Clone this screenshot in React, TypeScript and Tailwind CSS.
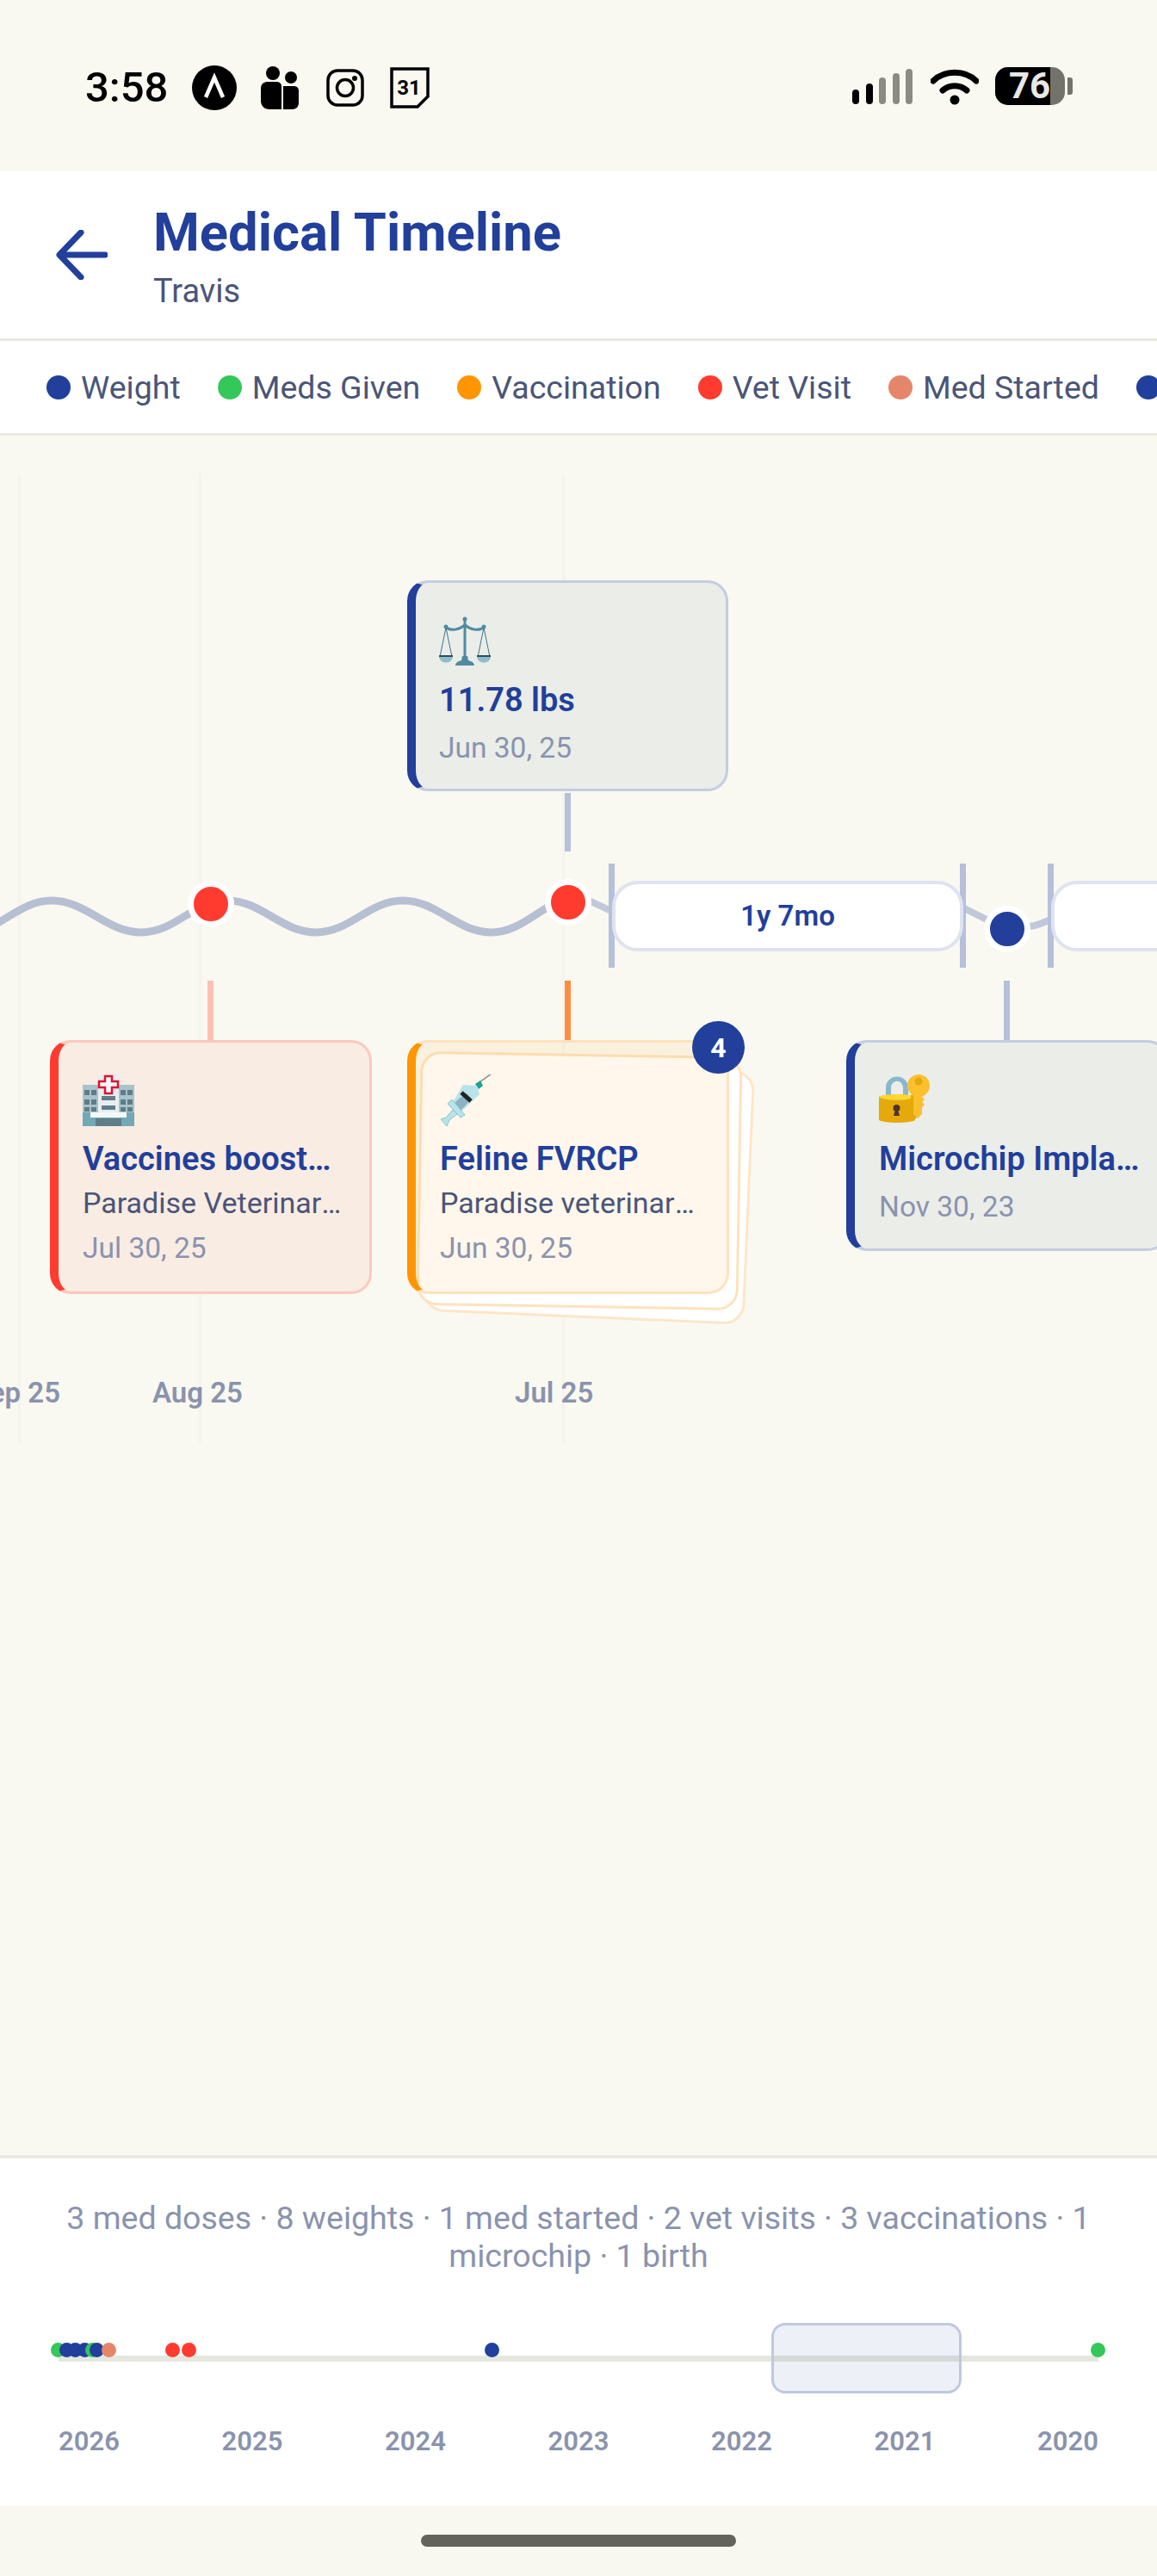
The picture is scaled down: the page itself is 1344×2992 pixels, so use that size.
import React from "react";

const ScaleEmoji = () => (
  <svg viewBox="0 0 60 60" className="w-[60px] h-[60px]">
    <path d="M8 14 L1 48 M8 14 L15 48 M52 14 L45 48 M52 14 L59 48" stroke="#3f7485" strokeWidth="1" fill="none" />
    <path d="M0 47 H16 C16 57 0 57 0 47 Z" fill="#8fbccb" />
    <path d="M44 47 H60 C60 57 44 57 44 47 Z" fill="#8fbccb" />
    <path d="M0 47 H16 M44 47 H60" stroke="#2f4f5a" strokeWidth="2" />
    <path d="M7 13 C14 19 24 16 30 11 C36 16 46 19 53 13" stroke="#4f8b9f" strokeWidth="3" fill="none" />
    <rect x="28.5" y="5" width="3" height="44" fill="#4f8b9f" />
    <circle cx="30" cy="4" r="2.5" fill="#4f8b9f" />
    <circle cx="8" cy="13" r="2.5" fill="#4f8b9f" />
    <circle cx="52" cy="13" r="2.5" fill="#4f8b9f" />
    <path d="M27 47 H33 L34 52 C38 53 41 55 41 58 H19 C19 55 22 53 26 52 Z" fill="#4f8b9f" />
  </svg>
);

const HospitalEmoji = () => (
  <svg viewBox="0 0 60 60" className="w-[60px] h-[60px]">
    <rect x="0" y="12" width="60" height="48" fill="#a8c3cb" />
    <rect x="18" y="0" width="24" height="50" fill="#e8edee" />
    <rect x="0" y="44" width="60" height="16" fill="#72a9b6" />
    <rect x="9" y="44" width="42" height="6" fill="#f5f8f8" />
    <g fill="#5f7d89">
      <rect x="2" y="18" width="6" height="6" />
      <rect x="10" y="18" width="6" height="6" />
      <rect x="2" y="29" width="6" height="6" />
      <rect x="10" y="29" width="6" height="6" />
      <rect x="2" y="38" width="6" height="5" />
      <rect x="10" y="38" width="6" height="5" />
      <rect x="44" y="18" width="6" height="6" />
      <rect x="52" y="18" width="6" height="6" />
      <rect x="44" y="29" width="6" height="6" />
      <rect x="52" y="29" width="6" height="6" />
      <rect x="44" y="38" width="6" height="5" />
      <rect x="52" y="38" width="6" height="5" />
      <rect x="22" y="25" width="16" height="5" />
      <rect x="22" y="36" width="16" height="5" />
      <rect x="15" y="51" width="30" height="9" />
    </g>
    <path d="M26 2 H34 V8 H41 V15 H34 V22 H26 V15 H19 V8 H26 Z" fill="#f5f8f8" stroke="#dd1133" strokeWidth="2.5" />
  </svg>
);

const SyringeEmoji = () => (
  <svg viewBox="0 0 60 60" className="w-[60px] h-[60px]">
    <path d="M46 9 L60 -1" stroke="#7a8a8f" strokeWidth="1.5" />
    <path d="M41 11 L47 7 L50 13 L45 17 Z" fill="#1aa58c" />
    <path d="M27 12 L43 13 L46 23 L24 44 L14 34 Z" fill="#b9e3ea" />
    <path d="M21 29 L31 22 L37 28 L24 42 L16 35 Z" fill="#8cb2c4" />
    <path d="M25 21 L36 31" stroke="#222" strokeWidth="5" />
    <path d="M14 29 L29 47 L24 50 L9 34 Z" fill="#b9e3ea" stroke="#8fc2cc" strokeWidth="1" />
    <path d="M15 41 L7 50 L1 52 L8 60 L11 53 L20 46 Z" fill="#b9e3ea" stroke="#8fc2cc" strokeWidth="1" />
  </svg>
);

const LockEmoji = () => (
  <svg viewBox="0 0 60 60" className="w-[60px] h-[60px]">
    <path d="M8 30 V16 C8 -2 34 -2 34 16 V30 H28 V16 C28 5 14 5 14 16 V30 Z" fill="#89b8cc" />
    <path d="M0 26 C6 22 36 22 42 26 V53 C36 57 6 57 0 53 Z" fill="#e5a90c" />
    <path d="M0 26 C6 22 36 22 42 26 C36 31 6 31 0 26 Z" fill="#fdd835" />
    <circle cx="20.5" cy="39" r="4" fill="#4e342e" />
    <path d="M19 41 H22 L24 48 H17 Z" fill="#4e342e" />
    <path d="M37 24 H45 V48 L42 52 H37 Z" fill="#e5a90c" />
    <circle cx="46" cy="13" r="13" fill="#fbc02d" />
    <path d="M40 22 H50 V26 L53 29 L50 32 L53 35 L50 38 V46 L45 51 L40 46 Z" fill="#fbc02d" />
    <circle cx="46" cy="8" r="4.5" fill="#e5a90c" />
  </svg>
);

const StatusBar = () => (
  <div className="h-[199px] bg-[#f9f9f1] flex items-start justify-between pl-[99px] pr-[98px] pt-[76px]">
    <div className="flex items-center h-[51px]">
      <span className="text-[49px] font-medium text-black w-[124px] leading-[51px]">3:58</span>
      <svg viewBox="0 0 52 52" className="w-[52px] h-[52px]">
        <circle cx="26" cy="26" r="26" fill="#000" />
        <path d="M16 37 L26 14 L36 37" stroke="#fff" strokeWidth="4.5" fill="none" />
      </svg>
      <svg viewBox="0 0 44 50" className="w-[44px] h-[50px] ml-[28px]">
        <circle cx="14" cy="8" r="8" fill="#000" />
        <circle cx="35" cy="13" r="7" fill="#000" />
        <path d="M0 26 C0 20 4 18 8 18 H18 C22 18 24 20 24 24 V50 H10 C4 50 0 46 0 40 Z" fill="#000" />
        <path d="M26 23 H38 C42 23 44 25 44 29 V42 C44 47 41 50 36 50 H26 Z" fill="#000" />
      </svg>
      <svg viewBox="0 0 44 44" className="w-[44px] h-[44px] ml-[32px]">
        <rect x="2" y="2" width="40" height="40" rx="11" fill="none" stroke="#000" strokeWidth="3.5" />
        <circle cx="22" cy="22" r="9.5" fill="none" stroke="#000" strokeWidth="3.5" />
        <circle cx="33" cy="11" r="3" fill="#000" />
      </svg>
      <svg viewBox="0 0 46 48" className="w-[46px] h-[48px] ml-[30px]">
        <path d="M2 2 H44 V34 L32 46 H2 Z" fill="none" stroke="#000" strokeWidth="3.5" />
        <text x="22" y="32" textAnchor="middle" fontSize="24" fontWeight="700" fontFamily="Roboto, sans-serif" fill="#000">31</text>
      </svg>
    </div>
    <div className="flex items-start">
      <svg viewBox="0 0 74 42" className="w-[74px] h-[42px] mt-[4px]">
        <g strokeWidth="8" strokeLinecap="round">
          <path d="M4 28 V37" stroke="#000" />
          <path d="M20 21 V37" stroke="#000" />
          <path d="M35 14 V37" stroke="#8b8b83" />
          <path d="M51 9 V37" stroke="#8b8b83" />
          <path d="M66 4 V37" stroke="#8b8b83" />
        </g>
      </svg>
      <svg viewBox="0 0 56 42" className="w-[56px] h-[42px] ml-[17px] mt-[4px]">
        <path d="M3 14 C16 1 40 1 53 14" stroke="#000" strokeWidth="7" strokeLinecap="round" fill="none" />
        <path d="M14 25 C22 18 34 18 42 25" stroke="#000" strokeWidth="7" strokeLinecap="round" fill="none" />
        <circle cx="28" cy="36" r="5.5" fill="#000" />
      </svg>
      <div className="flex items-center ml-[19px] mt-[2px]">
        <div className="relative w-[81px] h-[44px] rounded-[15px] overflow-hidden bg-[#73736b]">
          <div className="absolute left-0 top-0 bottom-0 w-[64px] bg-black" />
          <span className="absolute left-[16px] top-0 leading-[44px] text-[42px] font-bold text-[#e8e8e4]">76</span>
        </div>
        <div className="w-[6px] h-[20px] ml-[3px] rounded-r-[3px] bg-[#73736b]" />
      </div>
    </div>
  </div>
);

const Header = () => (
  <div className="h-[194px] bg-white flex items-center pl-[65px]">
    <svg viewBox="0 0 60 58" className="w-[60px] h-[58px]">
      <path d="M57 29 H5 M29 3 L4 29 L29 55" stroke="#213f9b" strokeWidth="7" strokeLinecap="round" strokeLinejoin="round" fill="none" />
    </svg>
    <div className="ml-[53px] flex flex-col pt-[4px]">
      <div className="text-[61.5px] leading-[72px] font-bold text-[#213f9b]">Medical Timeline</div>
      <div className="text-[38px] leading-[50px] mt-[7px] text-[#4a5578]">Travis</div>
    </div>
  </div>
);

const legendItems = [
  { label: "Weight", dot: "bg-[#213f9b]" },
  { label: "Meds Given", dot: "bg-[#34c759]" },
  { label: "Vaccination", dot: "bg-[#ff9500]" },
  { label: "Vet Visit", dot: "bg-[#ff3b30]" },
  { label: "Med Started", dot: "bg-[#e5866a]" },
  { label: "Microchip", dot: "bg-[#213f9b]" },
];

const Legend = () => (
  <div className="h-[113px] shrink-0 bg-white border-y-[3px] border-[#e9e9e1] flex items-center gap-[43px] pl-[54px] overflow-hidden whitespace-nowrap">
    {legendItems.map((item) => (
      <div key={item.label} className="flex items-center gap-[12px] shrink-0">
        <div className={`w-[28px] h-[28px] rounded-full ${item.dot}`} />
        <span className="text-[37.5px] leading-[44px] text-[#4a5578]">{item.label}</span>
      </div>
    ))}
  </div>
);

const Node = ({ className }: { className: string }) => (
  <div className={`absolute w-[54px] h-[54px] rounded-full border-[7px] border-white ${className}`} />
);

const CardText = ({
  title,
  subtitle,
  date,
}: {
  title: string;
  subtitle?: string;
  date: string;
}) => (
  <div className="flex flex-col mt-[10px]">
    <div className="text-[38px] leading-[56px] font-semibold text-[#213f9b] truncate">{title}</div>
    {subtitle && (
      <div className="text-[34px] leading-[46px] text-[#4a5578] truncate">{subtitle}</div>
    )}
    <div className={`text-[33.5px] leading-[52px] text-[#8a93ad] truncate ${subtitle ? "mt-[4px]" : "mt-[2px]"}`}>
      {date}
    </div>
  </div>
);

const Timeline = () => (
  <div className="flex-1 relative overflow-hidden bg-[#f9f9f1]">
    {/* month grid */}
    <div className="absolute left-[21px] top-[44px] w-[3px] h-[1126px] bg-[#f4f4ec]" />
    <div className="absolute left-[231px] top-[44px] w-[3px] h-[1126px] bg-[#f4f4ec]" />
    <div className="absolute left-[653px] top-[44px] w-[3px] h-[1126px] bg-[#f4f4ec]" />

    <svg viewBox="0 0 1344 700" className="absolute left-0 top-0 w-[1344px] h-[700px]">
      <path
        d="M-40 577 C0 577 20 540 60 540 S124 577 164 577 S224 540 264 540 S327 577 367 577 S428 540 468 540 S531 577 571 577 C600 577 620 555 645 543"
        stroke="#b7bfd3"
        strokeWidth="9"
        fill="none"
      />
      <path d="M682 539 L712 553 M1118 548 L1148 563 M1196 570 C1206 569 1214 565 1224 560" stroke="#c1c8da" strokeWidth="8" fill="none" />
    </svg>

    {/* gap markers */}
    <div className="absolute left-[707px] top-[497px] w-[7px] h-[121px] bg-[#b5c0d9]" />
    <div className="absolute left-[1115px] top-[497px] w-[7px] h-[121px] bg-[#b5c0d9]" />
    <div className="absolute left-[1217px] top-[497px] w-[7px] h-[121px] bg-[#b5c0d9]" />
    <div className="absolute left-[711px] top-[517px] w-[408px] h-[82px] rounded-[30px] bg-white border-[4px] border-[#dfe3f0] flex items-center justify-center text-[33px] font-semibold text-[#213f9b]">
      1y 7mo
    </div>
    <div className="absolute left-[1221px] top-[517px] w-[300px] h-[82px] rounded-[30px] bg-white border-[4px] border-[#dfe3f0]" />

    <Node className="left-[218px] top-[517px] bg-[#ff3b30]" />
    <Node className="left-[633px] top-[515px] bg-[#ff3b30]" />
    <Node className="left-[1143px] top-[546px] bg-[#213f9b]" />

    {/* connectors */}
    <div className="absolute left-[656px] top-[415px] w-[7px] h-[68px] bg-[#b5c0d9]" />
    <div className="absolute left-[241px] top-[633px] w-[7px] h-[69px] bg-[#fdc0b4]" />
    <div className="absolute left-[656px] top-[633px] w-[7px] h-[69px] bg-[#ff8c42]" />
    <div className="absolute left-[1166px] top-[633px] w-[7px] h-[69px] bg-[#b5c0d9]" />

    {/* weight card */}
    <div className="absolute left-[473px] top-[168px] w-[373px] h-[245px] rounded-[24px] border-[3px] border-l-[10px] border-[#c5cde0] border-l-[#213f9b] bg-[#ebede9] pl-[27px] pr-[24px] pt-[38px]">
      <ScaleEmoji />
      <CardText title="11.78 lbs" date="Jun 30, 25" />
    </div>

    {/* vet visit card */}
    <div className="absolute left-[58px] top-[702px] w-[374px] h-[295px] rounded-[24px] border-[3px] border-l-[10px] border-[#fcc8bf] border-l-[#ff3b30] bg-[#f9ece3] pl-[28px] pr-[30px] pt-[37px]">
      <HospitalEmoji />
      <CardText title="Vaccines boosters given" subtitle="Paradise Veterinary Clinic" date="Jul 30, 25" />
    </div>

    {/* vaccination stack */}
    <div className="absolute left-[497px] top-[730px] w-[374px] h-[295px] rounded-[24px] border-[3px] border-[#fde6c8] bg-white rotate-[2.5deg]" />
    <div className="absolute left-[486px] top-[718px] w-[374px] h-[295px] rounded-[24px] border-[3px] border-[#fee2bd] bg-white rotate-1" />
    <div className="absolute left-[473px] top-[702px] w-[374px] h-[295px] rounded-[24px] border-[3px] border-l-[10px] border-[#fee2bd] border-l-[#ff9500] bg-[#ff950014] pl-[28px] pr-[30px] pt-[37px]">
      <SyringeEmoji />
      <CardText title="Feline FVRCP" subtitle="Paradise veterinary clinic" date="Jun 30, 25" />
    </div>
    <div className="absolute left-[804px] top-[680px] w-[61px] h-[61px] rounded-full bg-[#213f9b] flex items-center justify-center text-[32px] font-bold text-white">
      4
    </div>

    {/* microchip card */}
    <div className="absolute left-[983px] top-[702px] w-[374px] h-[245px] rounded-[24px] border-[3px] border-l-[10px] border-[#c5cde0] border-l-[#213f9b] bg-[#ebede9] pl-[28px] pr-[24px] pt-[37px]">
      <LockEmoji />
      <CardText title="Microchip Implanted" date="Nov 30, 23" />
    </div>

    {/* month labels */}
    <div className="absolute right-[1274px] top-[1094px] text-[33px] leading-[36px] font-semibold text-[#8a93ad] whitespace-nowrap">Sep 25</div>
    <div className="absolute left-[177px] top-[1094px] text-[33px] leading-[36px] font-semibold text-[#8a93ad] whitespace-nowrap">Aug 25</div>
    <div className="absolute left-[598px] top-[1094px] text-[33px] leading-[36px] font-semibold text-[#8a93ad] whitespace-nowrap">Jul 25</div>
  </div>
);

const miniDots = [
  { left: "left-[-9px]", color: "bg-[#34c759]" },
  { left: "left-[1px]", color: "bg-[#213f9b]" },
  { left: "left-[11px]", color: "bg-[#213f9b]" },
  { left: "left-[22px]", color: "bg-[#213f9b]" },
  { left: "left-[31px]", color: "bg-[#34c759]" },
  { left: "left-[36px]", color: "bg-[#213f9b]" },
  { left: "left-[50px]", color: "bg-[#e5866a]" },
  { left: "left-[124px]", color: "bg-[#ff3b30]" },
  { left: "left-[143px]", color: "bg-[#ff3b30]" },
  { left: "left-[495px]", color: "bg-[#213f9b]" },
  { left: "left-[1199px]", color: "bg-[#34c759]" },
];

const years = ["2026", "2025", "2024", "2023", "2022", "2021", "2020"];

const Summary = () => (
  <div className="h-[408px] shrink-0 bg-white border-t-[4px] border-[#e9e9e1] flex flex-col">
    <div className="pt-[47px] px-[60px] text-center text-[37.5px] leading-[44px] text-[#8a93ad]">
      3 med doses · 8 weights · 1 med started · 2 vet visits · 3 vaccinations · 1 microchip · 1 birth
    </div>
    <div className="relative mt-[56px] mx-[68px] h-[82px]">
      <div className="absolute left-0 right-0 top-[38px] h-[7px] bg-[#e5e6dd]" />
      {miniDots.map((dot) => (
        <div
          key={dot.left}
          className={`absolute top-[23px] w-[17px] h-[17px] rounded-full ${dot.left} ${dot.color}`}
        />
      ))}
      <div className="absolute left-[828px] top-0 w-[221px] h-[82px] rounded-[16px] border-[3px] border-[#bfc8e0] bg-[#213f9b14]" />
    </div>
    <div className="mt-[38px] mx-[68px] flex justify-between text-[31px] leading-[36px] font-semibold text-[#8a93ad]">
      {years.map((year) => (
        <span key={year}>{year}</span>
      ))}
    </div>
  </div>
);

export default function App() {
  return (
    <div className="w-[1344px] h-[2992px] flex flex-col overflow-hidden bg-[#f9f9f1] font-['Roboto',sans-serif]">
      <StatusBar />
      <Header />
      <Legend />
      <Timeline />
      <Summary />
      <div className="h-[81px] shrink-0 bg-[#f8f8f0] flex justify-center pt-[33px]">
        <div className="w-[366px] h-[14px] rounded-full bg-[#63635b]" />
      </div>
    </div>
  );
}
